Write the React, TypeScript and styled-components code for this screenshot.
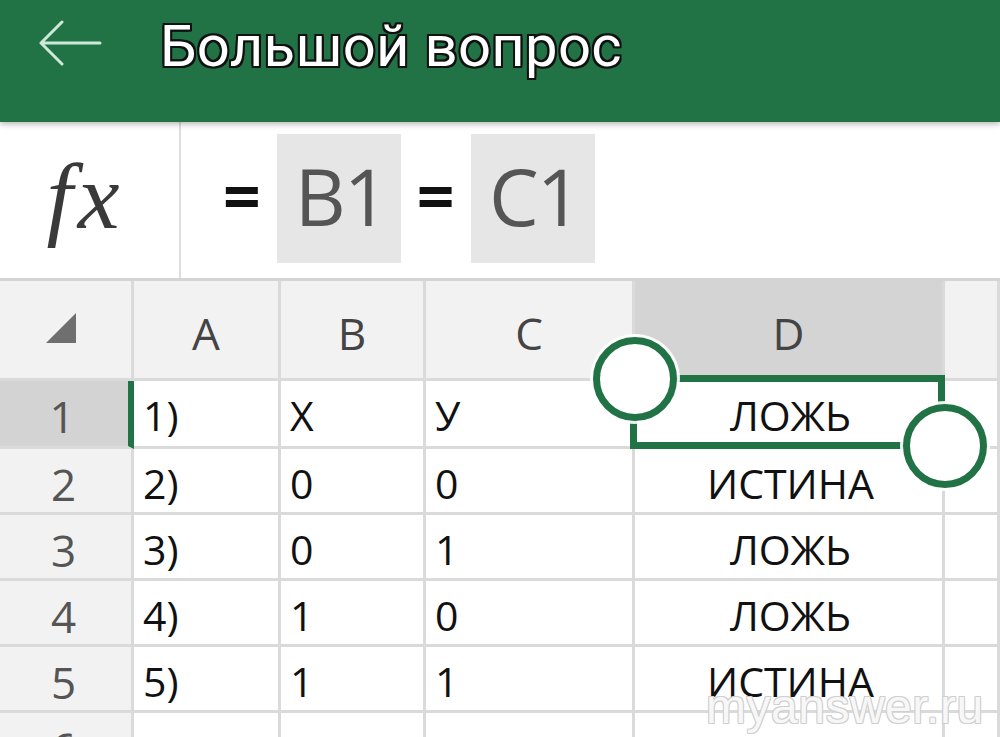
import React from "react";
import styled, { createGlobalStyle } from "styled-components";

const GREEN = "#217346";
const LINE = "#dadada";

const GlobalStyle = createGlobalStyle`
  html, body { margin: 0; padding: 0; background: #fff; overflow: hidden; }
  * { box-sizing: border-box; }
`;

const Page = styled.div`
  width: 1000px;
  height: 737px;
  overflow: hidden;
  position: relative;
  background: #fff;
  font-family: "Open Sans", "Noto Sans", sans-serif;
`;

const AppBar = styled.header`
  height: 122px;
  background: ${GREEN};
  display: flex;
  align-items: flex-start;
  padding: 20px 0 0 38px;
  gap: 58px;
  position: relative;
  z-index: 3;
  box-shadow: 0 2px 6px rgba(0, 0, 0, 0.3);
`;

const BackButton = styled.div`
  width: 64px;
  height: 48px;
  display: flex;
  align-items: center;
  justify-content: center;
`;

const Title = styled.h1`
  margin: 0;
  font-family: Roboto, "Liberation Sans", sans-serif;
  font-weight: 400;
  font-size: 58px;
  line-height: 52px;
  color: #fff;
  letter-spacing: 0.3px;
  text-shadow: -2px -2px 0 #111, 2px -2px 0 #111, -2px 2px 0 #111,
    2px 2px 0 #111, 0 -2px 0 #111, 0 2px 0 #111, -2px 0 0 #111, 2px 0 0 #111;
`;

const FormulaBar = styled.section`
  height: 159px;
  display: flex;
  border-bottom: 3px solid #d4d4d4;
`;

const FxCell = styled.div`
  width: 181px;
  border-right: 2px solid #dedede;
  display: flex;
  align-items: center;
  justify-content: center;
  padding: 0 8px 8px 0;
  font-family: "Liberation Serif", "DejaVu Serif", serif;
  font-style: italic;
  font-size: 94px;
  color: #3a3a3a;
  letter-spacing: 5px;
`;

const FormulaContent = styled.div`
  display: flex;
  align-items: center;
  padding: 0 0 4px 42px;
  gap: 16px;
`;

const Equals = styled.span`
  font-family: "Open Sans", sans-serif;
  font-weight: 700;
  font-size: 66px;
  color: #111;
  line-height: 1;
  padding-bottom: 6px;
`;

const RefBox = styled.span`
  width: 124px;
  height: 129px;
  background: #e6e6e6;
  display: flex;
  align-items: center;
  justify-content: center;
  font-family: "Open Sans", sans-serif;
  font-size: 79px;
  color: #555;
  letter-spacing: -2px;
  padding: 0 0 6px 4px;
`;

const Sheet = styled.div`
  display: flex;
  flex-direction: column;
`;

const SheetRow = styled.div<{ $h: number }>`
  display: flex;
  height: ${(p) => p.$h}px;
  flex-shrink: 0;
`;

const BaseCell = styled.div<{ $w?: number }>`
  ${(p) => (p.$w ? `width: ${p.$w}px;` : "flex: 1;")}
  flex-shrink: 0;
  height: 100%;
  border-right: 3px solid ${LINE};
  border-bottom: 3px solid ${LINE};
`;

const Corner = styled(BaseCell)`
  background: #f2f2f2;
  display: flex;
  align-items: center;
  justify-content: center;
  padding: 0 10px 4px 0;
`;

const ColHeader = styled(BaseCell)<{ $active?: boolean }>`
  background: ${(p) => (p.$active ? "#d4d4d4" : "#f2f2f2")};
  text-align: center;
  font-size: 44px;
  line-height: 87px;
  padding-top: 9px;
  color: #444;
`;

const RowHeader = styled(BaseCell)<{ $active?: boolean }>`
  background: ${(p) => (p.$active ? "#d3d3d3" : "#f2f2f2")};
  ${(p) => (p.$active ? `border-right: 6px solid ${GREEN};` : "")}
  text-align: center;
  font-size: 44px;
  line-height: 57px;
  padding: 7px 4px 0 0;
  color: #555;
`;

const DataCell = styled(BaseCell)<{ $center?: boolean }>`
  position: relative;
  background: #fff;
  text-align: ${(p) => (p.$center ? "center" : "left")};
  padding: 6px 0 0 ${(p) => (p.$center ? 4 : 9)}px;
  font-size: 41px;
  line-height: 57px;
  color: #111;
  white-space: nowrap;
`;

const Selection = styled.div`
  position: absolute;
  left: -5px;
  top: -6px;
  right: -3px;
  bottom: -3px;
  border: 7px solid ${GREEN};
  z-index: 2;
  pointer-events: none;
`;

const Handle = styled.div<{ $x: string; $y: string }>`
  position: absolute;
  left: ${(p) => p.$x};
  top: ${(p) => p.$y};
  width: 84px;
  height: 84px;
  margin: -42px 0 0 -42px;
  border-radius: 50%;
  border: 7px solid ${GREEN};
  background: #fff;
  box-shadow: 0 0 0 3px rgba(255, 255, 255, 0.9);
  z-index: 3;
`;

const Watermark = styled.div`
  position: absolute;
  left: 706px;
  top: 679px;
  font-family: "Liberation Sans", Arial, sans-serif;
  font-size: 48px;
  color: rgba(255, 255, 255, 0.85);
  letter-spacing: 0.5px;
  text-shadow: -1px -1px 0 #cfcfcf, 1px -1px 0 #cfcfcf, -1px 1px 0 #cfcfcf,
    1px 1px 0 #cfcfcf;
  z-index: 4;
  pointer-events: none;
`;

const WIDTHS = [134, 147, 145, 209, 310];

const rows: { n: number; cells: string[] }[] = [
  { n: 1, cells: ["1)", "X", "У", "ЛОЖЬ"] },
  { n: 2, cells: ["2)", "0", "0", "ИСТИНА"] },
  { n: 3, cells: ["3)", "0", "1", "ЛОЖЬ"] },
  { n: 4, cells: ["4)", "1", "0", "ЛОЖЬ"] },
  { n: 5, cells: ["5)", "1", "1", "ИСТИНА"] },
  { n: 6, cells: ["", "", "", ""] },
];

export default function App() {
  return (
    <>
      <GlobalStyle />
      <Page>
        <AppBar>
          <BackButton>
            <svg width="64" height="48" viewBox="0 0 64 48" fill="none">
              <path
                d="M62 23H3M24 2L3 23L24 44"
                stroke="#cfe9d8"
                strokeWidth="3"
                strokeLinecap="round"
                strokeLinejoin="round"
              />
            </svg>
          </BackButton>
          <Title>Большой вопрос</Title>
        </AppBar>

        <FormulaBar>
          <FxCell>fx</FxCell>
          <FormulaContent>
            <Equals>=</Equals>
            <RefBox>B1</RefBox>
            <Equals>=</Equals>
            <RefBox>C1</RefBox>
          </FormulaContent>
        </FormulaBar>

        <Sheet>
          <SheetRow $h={100}>
            <Corner $w={WIDTHS[0]}>
              <svg width="32" height="32" viewBox="0 0 32 32">
                <polygon points="31,1 31,31 1,31" fill="#6f6f6f" />
              </svg>
            </Corner>
            {["A", "B", "C", "D"].map((c, i) => (
              <ColHeader key={c} $w={WIDTHS[i + 1]} $active={c === "D"}>
                {c}
              </ColHeader>
            ))}
            <ColHeader />
          </SheetRow>

          {rows.map((r) => (
            <SheetRow key={r.n} $h={r.n === 1 ? 68 : 66}>
              <RowHeader $w={WIDTHS[0]} $active={r.n === 1}>
                {r.n}
              </RowHeader>
              {r.cells.map((v, i) => (
                <DataCell key={i} $w={WIDTHS[i + 1]} $center={i === 3}>
                  {v}
                  {r.n === 1 && i === 3 && (
                    <>
                      <Selection />
                      <Handle $x="0px" $y="-2px" />
                      <Handle $x="310px" $y="65px" />
                    </>
                  )}
                </DataCell>
              ))}
              <DataCell />
            </SheetRow>
          ))}
        </Sheet>

        <Watermark>myanswer.ru</Watermark>
      </Page>
    </>
  );
}
